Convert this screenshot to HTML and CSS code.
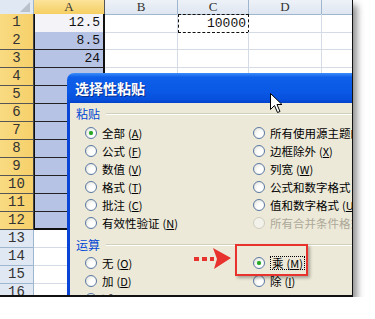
FILE: index.html
```html
<!DOCTYPE html>
<html>
<head>
<meta charset="utf-8">
<link rel="stylesheet" href="styles.css">
</head>
<body>
<div class="shot">
  <div class="sheet">
    <div class="row hdr">
      <div class="c rh corner"><span class="tri"></span></div>
      <div class="c ch ch-sel">A</div>
      <div class="c ch">B</div>
      <div class="c ch">C</div>
      <div class="c ch">D</div>
      <div class="c ch"></div>
    </div>
    <div class="row"><div class="c rh rs">1</div><div class="c a act num">12.5</div><div class="c"></div><div class="c num ants">10000</div><div class="c"></div><div class="c"></div></div>
    <div class="row"><div class="c rh rs">2</div><div class="c a num">8.5</div><div class="c"></div><div class="c"></div><div class="c"></div><div class="c"></div></div>
    <div class="row"><div class="c rh rs">3</div><div class="c a num">24</div><div class="c"></div><div class="c"></div><div class="c"></div><div class="c"></div></div>
    <div class="row"><div class="c rh rs">4</div><div class="c a"></div><div class="c"></div><div class="c"></div><div class="c"></div><div class="c"></div></div>
    <div class="row"><div class="c rh rs">5</div><div class="c a"></div><div class="c"></div><div class="c"></div><div class="c"></div><div class="c"></div></div>
    <div class="row"><div class="c rh rs">6</div><div class="c a"></div><div class="c"></div><div class="c"></div><div class="c"></div><div class="c"></div></div>
    <div class="row"><div class="c rh rs">7</div><div class="c a"></div><div class="c"></div><div class="c"></div><div class="c"></div><div class="c"></div></div>
    <div class="row"><div class="c rh rs">8</div><div class="c a"></div><div class="c"></div><div class="c"></div><div class="c"></div><div class="c"></div></div>
    <div class="row"><div class="c rh rs">9</div><div class="c a"></div><div class="c"></div><div class="c"></div><div class="c"></div><div class="c"></div></div>
    <div class="row"><div class="c rh rs">10</div><div class="c a"></div><div class="c"></div><div class="c"></div><div class="c"></div><div class="c"></div></div>
    <div class="row"><div class="c rh rs">11</div><div class="c a"></div><div class="c"></div><div class="c"></div><div class="c"></div><div class="c"></div></div>
    <div class="row"><div class="c rh rs">12</div><div class="c a last"></div><div class="c"></div><div class="c"></div><div class="c"></div><div class="c"></div></div>
    <div class="row"><div class="c rh">13</div><div class="c"></div><div class="c"></div><div class="c"></div><div class="c"></div><div class="c"></div></div>
    <div class="row"><div class="c rh">14</div><div class="c"></div><div class="c"></div><div class="c"></div><div class="c"></div><div class="c"></div></div>
    <div class="row"><div class="c rh">15</div><div class="c"></div><div class="c"></div><div class="c"></div><div class="c"></div><div class="c"></div></div>
    <div class="row"><div class="c rh">16</div><div class="c"></div><div class="c"></div><div class="c"></div><div class="c"></div><div class="c"></div></div>
  </div>

  <div class="dialog">
    <div class="title">选择性粘贴</div>
    <div class="body">
      <div class="legend first"><span>粘贴</span><i class="sep"></i></div>
      <div class="opts">
        <div class="opt"><span class="radio on"></span><span>全部<span class="k">(<u>A</u>)</span></span></div>
        <div class="opt"><span class="radio"></span><span>所有使用源主题的单元<span class="k">(<u>H</u>)</span></span></div>
        <div class="opt"><span class="radio"></span><span>公式<span class="k">(<u>F</u>)</span></span></div>
        <div class="opt"><span class="radio"></span><span>边框除外<span class="k">(<u>X</u>)</span></span></div>
        <div class="opt"><span class="radio"></span><span>数值<span class="k">(<u>V</u>)</span></span></div>
        <div class="opt"><span class="radio"></span><span>列宽<span class="k">(<u>W</u>)</span></span></div>
        <div class="opt"><span class="radio"></span><span>格式<span class="k">(<u>T</u>)</span></span></div>
        <div class="opt"><span class="radio"></span><span>公式和数字格式<span class="k">(<u>R</u>)</span></span></div>
        <div class="opt"><span class="radio"></span><span>批注<span class="k">(<u>C</u>)</span></span></div>
        <div class="opt"><span class="radio"></span><span>值和数字格式<span class="k">(<u>U</u>)</span></span></div>
        <div class="opt"><span class="radio"></span><span>有效性验证<span class="k">(<u>N</u>)</span></span></div>
        <div class="opt dis"><span class="radio"></span><span>所有合并条件格式<span class="k">(<u>G</u>)</span></span></div>
      </div>
      <div class="legend"><span>运算</span><i class="sep"></i></div>
      <div class="opts">
        <div class="opt"><span class="radio"></span><span>无<span class="k">(<u>O</u>)</span></span></div>
        <div class="opt"><span class="radio on"></span><span class="focus">乘<span class="k">(<u>M</u>)</span></span></div>
        <div class="opt"><span class="radio"></span><span>加<span class="k">(<u>D</u>)</span></span></div>
        <div class="opt"><span class="radio"></span><span>除<span class="k">(<u>I</u>)</span></span></div>
        <div class="opt"><span class="radio"></span><span>减<span class="k">(<u>S</u>)</span></span></div>
        <div class="opt"></div>
      </div>
    </div>
  </div>

  <div class="redbox"></div>
  <svg class="arrow" width="42" height="26" viewBox="0 0 42 26">
    <rect x="1" y="10" width="5" height="4" fill="#e8322e"/>
    <rect x="9" y="10" width="5" height="4" fill="#e8322e"/>
    <rect x="17" y="10" width="4" height="4" fill="#e8322e"/>
    <path d="M20 1 L38 11 L21 22 L24 12 Z" fill="#e8322e"/>
  </svg>
  <svg class="cursor" width="13" height="21" viewBox="0 0 13 21">
    <path d="M0.5 0.5 L0.5 16.5 L4.5 12.5 L7.5 19.5 L10 18.5 L7 11.5 L12 11.5 Z" fill="#fff" stroke="#000" stroke-width="1" stroke-linejoin="miter"/>
  </svg>
</div>
</body>
</html>
```

FILE: styles.css
```css
html, body {
  margin: 0;
  padding: 0;
  background: #fff;
}

.shot {
  position: relative;
  width: 352px;
  height: 295px;
  overflow: hidden;
  border-right: 1px solid #111;
  border-bottom: 2px solid #111;
  box-shadow: 4px 5px 7px rgba(0, 0, 0, 0.45);
  background: #fff;
}

.sheet {
  display: flex;
  flex-direction: column;
}

.row {
  display: grid;
  grid-template-columns: 34px 71px 73px 71px 73px 60px;
  height: 18px;
}

.row.hdr {
  height: 14px;
}

.c {
  box-sizing: border-box;
  border-right: 1px solid #d4dbe6;
  border-bottom: 1px solid #d4dbe6;
  font-family: "Liberation Mono", "DejaVu Sans Mono", monospace;
  font-size: 13px;
  line-height: 17px;
  color: #111;
  white-space: nowrap;
}

.ch {
  background: linear-gradient(#eef2f8, #dee6f1);
  border-right: 1px solid #9eb6ce;
  border-bottom: 1px solid #9eb6ce;
  text-align: center;
  font-family: "Liberation Serif", serif;
  font-size: 13px;
  line-height: 14px;
  color: #333;
}

.ch-sel {
  background: linear-gradient(#fbe39a, #f6cf62);
  border-bottom: 1px solid #555;
  border-right: 1px solid #555;
}

.corner {
  display: flex;
  justify-content: flex-end;
  align-items: flex-end;
  padding: 0 3px 2px 0;
  background: #e6ebf2;
  border-right: 1px solid #9eb6ce;
  border-bottom: 1px solid #9eb6ce;
}

.tri {
  width: 0;
  height: 0;
  border-left: 10px solid transparent;
  border-bottom: 10px solid #b9c1cc;
}

.rh {
  background: #e0e8f4;
  border-right: 1px solid #9eb6ce;
  border-bottom: 1px solid #9eb6ce;
  text-align: center;
  font-size: 14px;
  color: #333;
}

.rh.rs {
  background: linear-gradient(90deg, #f9db82, #f6d06a);
  border-right: 1px solid #444;
  border-bottom: 1px solid #555;
}

.a {
  background: #b7c3e5;
  border-left: 1px solid #111;
  border-right: 2px solid #111;
  border-bottom: 1px solid #222;
}

.a.act {
  background: #f3f3f8;
}

.a.last {
  border-bottom: 2px solid #111;
}

.num {
  text-align: right;
  padding-right: 3px;
}

.ants {
  border: 1px dashed #111;
  padding-right: 2px;
}

/* dialog */
.dialog {
  position: absolute;
  left: 67px;
  top: 73px;
  width: 310px;
  height: 240px;
  display: flex;
  flex-direction: column;
  font-family: "Noto Sans CJK SC", "Noto Sans", sans-serif;
}

.title {
  height: 30px;
  box-sizing: border-box;
  padding-left: 8px;
  border-top-left-radius: 7px;
  background: linear-gradient(#3d8ef9 0, #0e5fe9 14%, #0a59e6 60%, #0650dd 88%, #0340c8 100%);
  color: #fff;
  font-weight: bold;
  font-size: 14px;
  line-height: 30px;
  text-shadow: 1px 1px 0 #0a2f8c;
  white-space: nowrap;
}

.body {
  flex: 1;
  background: #ece9d8;
  border-left: 3px solid #0b45d6;
  padding-top: 2px;
}

.legend {
  display: flex;
  align-items: center;
  gap: 6px;
  height: 18px;
  padding-left: 6px;
  margin-top: 4px;
  color: #0046d5;
  font-size: 12px;
  line-height: 18px;
}

.legend.first {
  margin-top: 0;
}

.sep {
  flex: 1;
  height: 0;
  border-top: 1px solid #d0d0bf;
  border-bottom: 1px solid #fff;
}

.opts {
  display: grid;
  grid-template-columns: 168px 1fr;
  grid-auto-rows: 18px;
  padding-left: 15px;
}

.legend.first + .opts {
  margin-top: 1px;
}

.opt {
  display: flex;
  align-items: center;
  gap: 5px;
  font-size: 11.5px;
  line-height: 18px;
  color: #000;
  white-space: nowrap;
}

.k {
  margin-left: 3px;
  font-size: 11px;
}

.opt u {
  text-decoration: underline;
}

.radio {
  flex: none;
  box-sizing: border-box;
  width: 12px;
  height: 12px;
  border-radius: 50%;
  border: 1px solid #5b78a3;
  background: radial-gradient(circle at 65% 65%, #ffffff 30%, #dcdcd3 100%);
  display: flex;
  align-items: center;
  justify-content: center;
}

.radio.on::after {
  content: "";
  width: 4px;
  height: 4px;
  border-radius: 50%;
  background: #27a527;
  box-shadow: 0 0 1px #5fd05f;
}

.opt.dis {
  color: #aca899;
}

.opt.dis .radio {
  border-color: #cfcdc0;
  background: #f2f1ea;
}

.focus {
  outline: 1px dotted #000;
  outline-offset: -1px;
  padding: 0 2px;
  line-height: 14px;
}

.redbox {
  position: absolute;
  left: 235px;
  top: 244px;
  width: 73px;
  height: 32px;
  box-sizing: border-box;
  border: 2px solid #e8322e;
  box-shadow: 2px 2px 3px rgba(0, 0, 0, 0.3);
}

.arrow {
  position: absolute;
  left: 193px;
  top: 247px;
}

.cursor {
  position: absolute;
  left: 270px;
  top: 93px;
}
```
